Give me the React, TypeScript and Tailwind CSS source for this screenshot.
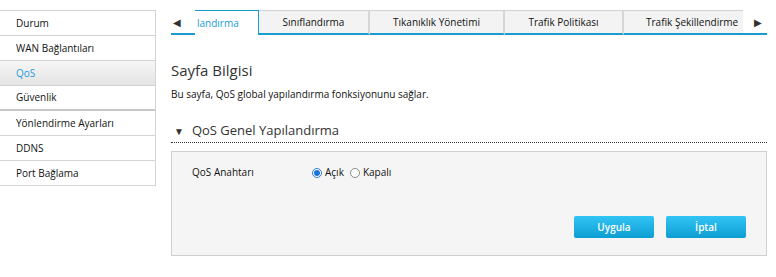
const menu = [
  { label: "Durum" },
  { label: "WAN Bağlantıları" },
  { label: "QoS", active: true },
  { label: "Güvenlik", gap: true },
  { label: "Yönlendirme Ayarları" },
  { label: "DDNS" },
  { label: "Port Bağlama" },
];

const Radio = ({ checked }: { checked?: boolean }) => (
  <span
    className={
      checked
        ? "flex h-[10px] w-[10px] items-center justify-center rounded-full border border-[#2f7fd8] bg-white"
        : "flex h-[10px] w-[10px] items-center justify-center rounded-full border border-[#8a8a8a] bg-white"
    }
  >
    {checked && <span className="h-[6px] w-[6px] rounded-full bg-[#1e73d8]" />}
  </span>
);

const App = () => {
  return (
    <div
      className="flex h-[277px] w-[776px] bg-white pt-[10px] text-[10px] text-[#111]"
      style={{ fontFamily: '"Open Sans", "Noto Sans", sans-serif' }}
    >
      {/* Sidebar */}
      <aside className="w-[156px] shrink-0 self-start border-r border-[#d4d4d4]">
        <ul className="border-t border-[#d4d4d4]">
          {menu.map((m) => (
            <li
              key={m.label}
              className={[
                "flex h-[25px] items-center pl-[16px]",
                m.gap ? "border-b-[2px] border-[#c8c8c8]" : "border-b border-[#d4d4d4]",
                m.active ? "bg-gradient-to-b from-[#f6f6f6] to-[#e4e4e4] text-[#1e9bd7]" : "bg-white",
              ].join(" ")}
            >
              {m.label}
            </li>
          ))}
        </ul>
      </aside>

      {/* Main */}
      <main className="flex-1 pl-[15px] pr-[9px]">
        {/* Tabs */}
        <div className="flex h-[25px]">
          <div className="flex w-[24px] items-center border-b-2 border-[#1a9bd1] bg-white pl-[2px]">
            <span className="text-[10px] leading-none text-[#333]">◀</span>
          </div>
          <div className="flex w-[64px] items-center whitespace-nowrap border-t border-r border-[#1a9bd1] bg-white pl-[2px] text-[#1a9bd1]">
            landırma
          </div>
          <div className="flex w-[111px] items-center justify-center border-t border-r-2 border-b-2 border-t-[#d0d0d0] border-r-[#d6d6d6] border-b-[#1a9bd1] bg-[#f3f3f3]">
            Sınıflandırma
          </div>
          <div className="flex w-[135px] items-center justify-center border-t border-r-2 border-b-2 border-t-[#d0d0d0] border-r-[#d6d6d6] border-b-[#1a9bd1] bg-[#f3f3f3]">
            Tıkanıklık Yönetimi
          </div>
          <div className="flex w-[119px] items-center justify-center border-t border-r-2 border-b-2 border-t-[#d0d0d0] border-r-[#d6d6d6] border-b-[#1a9bd1] bg-[#f3f3f3]">
            Trafik Politikası
          </div>
          <div className="flex w-[119px] items-center whitespace-nowrap border-t border-b-2 border-t-[#d0d0d0] border-b-[#1a9bd1] bg-[#f3f3f3] pl-[22px]">
            Trafik Şekillendirme
          </div>
          <div className="flex w-[24px] items-center justify-end border-b-2 border-[#1a9bd1] bg-white pr-[5px]">
            <span className="text-[10px] leading-none text-[#333]">▶</span>
          </div>
        </div>

        {/* Page info */}
        <h2 className="mt-[25px] text-[15px] leading-[20px] text-[#333]">Sayfa Bilgisi</h2>
        <p className="mt-[7px] leading-[14px]">Bu sayfa, QoS global yapılandırma fonksiyonunu sağlar.</p>

        {/* Section */}
        <div className="mt-[18px] flex h-[24px] items-center border-b border-dotted border-[#333] pl-[3px]">
          <span className="text-[10px] leading-none text-[#333]">▼</span>
          <span className="ml-[8px] text-[13px] text-[#333]">QoS Genel Yapılandırma</span>
        </div>

        <div className="mt-[8px] h-[105px] border border-[#cfcfcf] bg-[#f5f5f5] px-[20px]">
          <div className="mt-[13px] flex items-center">
            <span className="w-[120px]">QoS Anahtarı</span>
            <label className="flex items-center gap-[3px]">
              <Radio checked />
              <span>Açık</span>
            </label>
            <label className="ml-[6px] flex items-center gap-[3px]">
              <Radio />
              <span>Kapalı</span>
            </label>
          </div>
          <div className="mt-[36px] flex justify-end gap-[12px]">
            <button className="h-[22px] w-[80px] rounded-[2px] bg-gradient-to-b from-[#30c4f5] to-[#0b9ed2] font-semibold text-white">
              Uygula
            </button>
            <button className="h-[22px] w-[80px] rounded-[2px] bg-gradient-to-b from-[#30c4f5] to-[#0b9ed2] font-semibold text-white">
              İptal
            </button>
          </div>
        </div>
      </main>
    </div>
  );
};

export default App;
